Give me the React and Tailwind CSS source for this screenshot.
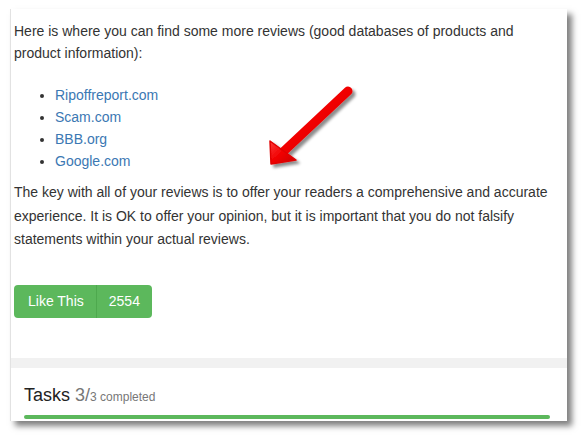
import React from "react";

const links = ["Ripoffreport.com", "Scam.com", "BBB.org", "Google.com"];

function RedArrow() {
  return (
    <svg
      className="absolute left-[240px] top-[60px] pointer-events-none"
      width="120"
      height="110"
      viewBox="0 0 120 110"
    >
      <defs>
        <linearGradient id="arrowFill" x1="0" y1="0" x2="1" y2="1">
          <stop offset="0" stopColor="#ff3b3b" />
          <stop offset="0.5" stopColor="#f00000" />
          <stop offset="1" stopColor="#c80000" />
        </linearGradient>
        <filter id="arrowShadow" x="-20%" y="-20%" width="150%" height="150%">
          <feDropShadow dx="3" dy="3" stdDeviation="1.6" floodColor="#000" floodOpacity="0.45" />
        </filter>
      </defs>
      <g filter="url(#arrowShadow)">
        <line x1="97" y1="22" x2="33" y2="82" stroke="url(#arrowFill)" strokeWidth="9" strokeLinecap="round" />
        <polygon points="20,95 19,72 45,91" fill="url(#arrowFill)" stroke="#e00000" strokeWidth="1.5" strokeLinejoin="round" />
      </g>
    </svg>
  );
}

export default function App() {
  return (
    <div className="w-[585px] h-[441px] bg-white pt-[9px] pl-[10px] font-['Liberation_Sans',Arial,sans-serif] text-[#333]">
      <div className="relative w-[557px] bg-white border-l border-[#e2e2e2] shadow-[5px_5px_6px_rgba(0,0,0,0.5)]">
        {/* post body */}
        <div className="pt-[11px] pl-[3px] pr-[13px] pb-[40px] text-[14px]">
          <p className="leading-[22px]">
            Here is where you can find some more reviews (good databases of products and product information):
          </p>

          <ul className="mt-[20px] pl-[41px] list-disc leading-[22px] marker:text-[#333]">
            {links.map((l) => (
              <li key={l}>
                <a href="#" className="text-[#3b78b3]">{l}</a>
              </li>
            ))}
          </ul>

          <p className="mt-[9px] leading-[23.5px]">
            The key with all of your reviews is to offer your readers a comprehensive and accurate experience. It is OK to offer your opinion, but it is important that you do not falsify statements within your actual reviews.
          </p>

          <div className="mt-[33px] flex w-[138px] h-[33px] rounded-[4px] bg-[#5cb85c] text-white text-[14px]">
            <div className="flex items-center pl-[14px] pr-[12px] border-r border-[#4ea94e]">Like This</div>
            <div className="flex items-center pl-[12px]">2554</div>
          </div>
        </div>

        <div className="h-[10px] bg-[#f1f1f1]" />

        {/* tasks */}
        <div className="pt-[16px] pl-[13px] pr-[17px] pb-[2px]">
          <div className="leading-[22px] whitespace-nowrap">
            <span className="text-[18px] text-[#222]">Tasks </span>
            <span className="text-[18px] text-[#777]">3/</span>
            <span className="text-[12px] text-[#777]">3 completed</span>
          </div>
          <div className="mt-[7px] h-[4px] rounded-full bg-[#5cb85c]" />
        </div>

        <RedArrow />
      </div>
    </div>
  );
}
